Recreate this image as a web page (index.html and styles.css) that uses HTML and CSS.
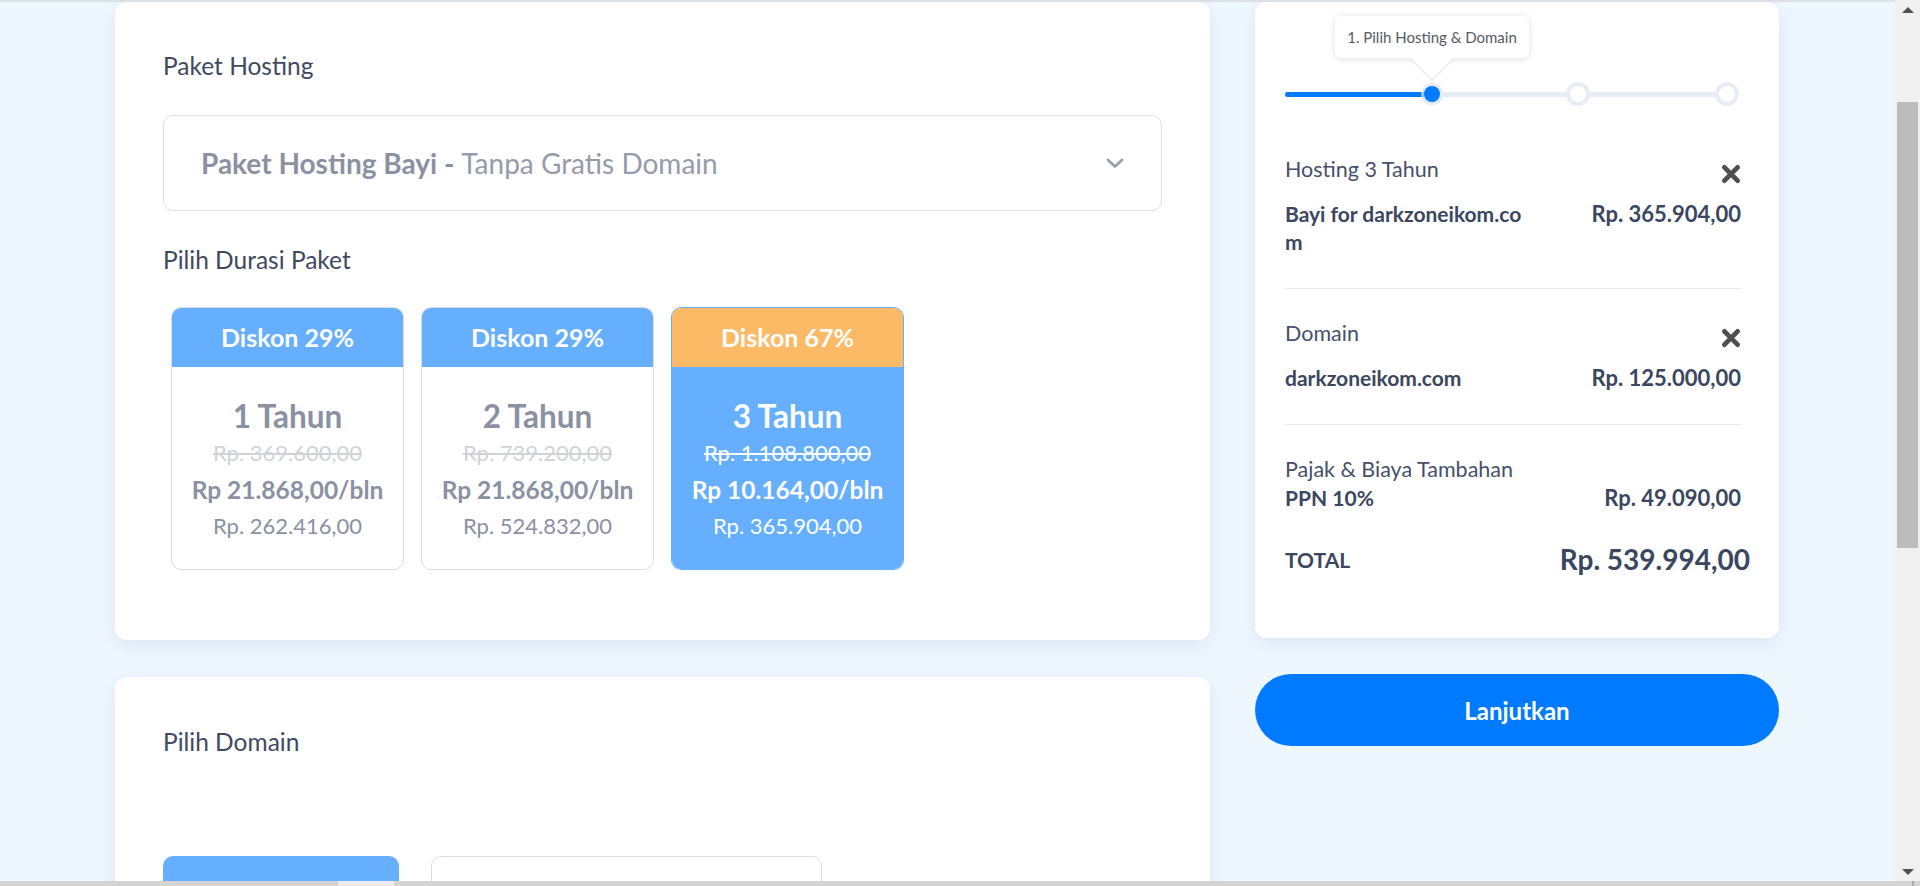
FILE: index.html
```html
<!DOCTYPE html>
<html lang="id">
<head>
<meta charset="utf-8">
<title>Pilih Hosting &amp; Domain</title>
<link rel="stylesheet" href="styles.css">
</head>
<body>
<div class="topline"></div>
<main class="page">
  <div class="col-left">
    <section class="card card-hosting">
      <div class="label">Paket Hosting</div>
      <div class="select">
        <span class="select-text"><b>Paket Hosting Bayi - </b>Tanpa Gratis Domain</span>
        <svg class="chev" viewBox="0 0 18 11"><polyline points="2,2 9,8.5 16,2" fill="none" stroke="#9a9fa8" stroke-width="2.8" stroke-linecap="round" stroke-linejoin="round"/></svg>
      </div>
      <div class="label label-dur">Pilih Durasi Paket</div>
      <div class="durations">
        <div class="dur">
          <div class="dur-head">Diskon 29%</div>
          <div class="dur-body">
            <div class="dur-year">1 Tahun</div>
            <div class="dur-strike">Rp. 369.600,00</div>
            <div class="dur-month">Rp 21.868,00/bln</div>
            <div class="dur-total">Rp. 262.416,00</div>
          </div>
        </div>
        <div class="dur">
          <div class="dur-head">Diskon 29%</div>
          <div class="dur-body">
            <div class="dur-year">2 Tahun</div>
            <div class="dur-strike">Rp. 739.200,00</div>
            <div class="dur-month">Rp 21.868,00/bln</div>
            <div class="dur-total">Rp. 524.832,00</div>
          </div>
        </div>
        <div class="dur active">
          <div class="dur-head">Diskon 67%</div>
          <div class="dur-body">
            <div class="dur-year">3 Tahun</div>
            <div class="dur-strike">Rp. 1.108.800,00</div>
            <div class="dur-month">Rp 10.164,00/bln</div>
            <div class="dur-total">Rp. 365.904,00</div>
          </div>
        </div>
      </div>
    </section>
    <section class="card card-domain">
      <div class="label">Pilih Domain</div>
      <div class="domain-opts">
        <div class="opt opt-active"></div>
        <div class="opt opt-plain"></div>
      </div>
    </section>
  </div>

  <aside class="col-right">
    <section class="card summary">
      <div class="steps-wrap">
        <div class="tooltip">1. Pilih Hosting &amp; Domain</div>
        <div class="steps">
          <span class="seg seg-done"></span>
          <span class="dot-active"></span>
          <span class="seg"></span>
          <span class="dot"></span>
          <span class="seg"></span>
          <span class="dot"></span>
        </div>
      </div>

      <div class="item">
        <div class="item-head">
          <span>Hosting 3 Tahun</span>
          <svg class="x" viewBox="0 0 20 20"><path d="M4 4L16 16M16 4L4 16" stroke="#4f4f4f" stroke-width="4.4" stroke-linecap="round"/></svg>
        </div>
        <div class="item-row">
          <span class="name">Bayi for darkzoneikom.com</span>
          <span class="price">Rp. 365.904,00</span>
        </div>
      </div>

      <div class="item">
        <div class="item-head">
          <span>Domain</span>
          <svg class="x" viewBox="0 0 20 20"><path d="M4 4L16 16M16 4L4 16" stroke="#4f4f4f" stroke-width="4.4" stroke-linecap="round"/></svg>
        </div>
        <div class="item-row">
          <span class="name">darkzoneikom.com</span>
          <span class="price">Rp. 125.000,00</span>
        </div>
      </div>

      <div class="tax">
        <div class="tax-label">Pajak &amp; Biaya Tambahan</div>
        <div class="tax-row">
          <span>PPN 10%</span>
          <span class="price">Rp. 49.090,00</span>
        </div>
      </div>

      <div class="total">
        <span class="total-label">TOTAL</span>
        <span class="total-amount">Rp. 539.994,00</span>
      </div>
    </section>
    <button class="btn" type="button">Lanjutkan</button>
  </aside>
</main>

<div class="vscroll">
  <span class="arrow-up"></span>
  <span class="thumb"></span>
  <span class="arrow-down"></span>
</div>
<div class="hscroll"><span class="hseg"></span><span class="htick"></span></div>
</body>
</html>
```

FILE: styles.css
```css
* { box-sizing: border-box; margin: 0; padding: 0; }
html, body { height: 100%; }
body {
  background: #eef6fe;
  font-family: Lato, "Liberation Sans", sans-serif;
  color: #3f4a60;
  overflow: hidden;
}
.topline { height: 2px; background: #dde2e8; }

.page {
  display: flex;
  align-items: flex-start;
  gap: 45px;
  padding-left: 115px;
}
.col-left {
  width: 1095px;
  display: flex;
  flex-direction: column;
  gap: 37px;
}
.card {
  background: #fff;
  border-radius: 12px;
  box-shadow: 0 6px 18px rgba(40, 70, 130, 0.08);
}

/* hosting card */
.card-hosting { padding: 49px 48px 70px 48px; }
.label { font-size: 24.5px; line-height: 30px; color: #3f4a60; }
.select {
  margin-top: 34px;
  height: 96px;
  border: 1px solid #dcdfe4;
  border-radius: 10px;
  display: flex;
  align-items: center;
  justify-content: space-between;
  padding: 0 37px 0 37px;
}
.select-text { font-size: 28px; color: #969bab; }
.select-text b { font-weight: 700; color: #8b91a1; }
.chev { width: 18px; height: 11px; }
.label-dur { margin-top: 34px; }

.durations {
  margin-top: 32px;
  display: flex;
  gap: 17px;
  padding-left: 8px;
}
.dur {
  width: 233px;
  height: 263px;
  border: 1px solid #dcdcdc;
  border-radius: 10px;
  overflow: hidden;
  text-align: center;
  display: flex;
  flex-direction: column;
}
.dur-head {
  height: 59px;
  line-height: 59px;
  background: #66affe;
  color: #fff;
  font-weight: 700;
  font-size: 25px;
}
.dur-body { flex: 1; padding-top: 31px; color: #8a91a3; }
.dur-year { font-size: 31.5px; line-height: 36px; font-weight: 700; }
.dur-strike { font-size: 22px; line-height: 37px; text-decoration: line-through; color: #d0d3d8; }
.dur-month { font-size: 24.5px; line-height: 37px; font-weight: 700; }
.dur-total { font-size: 22px; line-height: 36px; }
.dur.active { border-color: #66affe; }
.dur.active .dur-head { background: #fcb966; }
.dur.active .dur-body { background: #66affe; color: #fff; }
.dur.active .dur-strike { color: #fff; }

/* domain card */
.card-domain { padding: 50px 48px 0; height: 420px; }
.domain-opts { margin-top: 99px; display: flex; gap: 32px; }
.opt { height: 140px; border-radius: 10px; }
.opt-active { width: 236px; background: #66affe; }
.opt-plain { width: 391px; border: 1px solid #dcdcdc; background: #fff; }

/* summary */
.col-right { width: 524px; }
.summary { padding: 0 38px 59px 30px; }
.steps-wrap { position: relative; padding-top: 80px; }
.tooltip {
  position: absolute;
  z-index: 1;
  top: 14px;
  left: 50px;
  width: 194px;
  height: 42px;
  line-height: 42px;
  text-align: center;
  font-size: 15px;
  color: #555b66;
  background: #fff;
  border-radius: 6px;
  box-shadow: 0 1px 7px rgba(0, 0, 0, 0.13);
}
.tooltip::after {
  content: "";
  position: absolute;
  left: 50%;
  bottom: -15px;
  width: 30px;
  height: 30px;
  margin-left: -15px;
  background: #fff;
  transform: rotate(45deg);
  box-shadow: 1px 1px 2px rgba(0, 0, 0, 0.1);
  z-index: -1;
}
.steps { display: flex; align-items: center; height: 24px; width: 454px; }
.seg { height: 5px; background: #e6edf5; flex: 1; }
.seg-done { flex: none; width: 139px; background: #007bff; border-radius: 3px 0 0 3px; }
.dot-active {
  width: 16px;
  height: 16px;
  border-radius: 50%;
  background: #007bff;
  box-shadow: 0 0 0 3px rgba(220, 228, 240, 0.7), 0 1px 5px rgba(0, 0, 0, 0.15);
}
.dot {
  width: 24px;
  height: 24px;
  border-radius: 50%;
  border: 4px solid #e6edf5;
  background: #fff;
}

.item { padding: 49px 0 32px; border-bottom: 1px solid #e9ecef; }
.item + .item { padding-top: 30px; }
.item-head {
  display: flex;
  justify-content: space-between;
  align-items: flex-start;
  font-size: 21.5px;
  line-height: 28px;
  color: #46506a;
}
.x { width: 22px; height: 22px; margin-top: 8px; margin-right: -1px; }
.item-row {
  margin-top: 15px;
  display: grid;
  grid-template-columns: 242px 1fr;
  font-size: 21px;
  font-weight: 700;
  line-height: 28px;
  color: #3b4660;
}
.item-row .name { word-break: break-all; }
.price { text-align: right; font-size: 22px; }

.tax { padding-top: 30px; }
.tax-label { font-size: 21.5px; line-height: 28px; color: #46506a; }
.tax-row {
  margin-top: 1px;
  display: flex;
  justify-content: space-between;
  font-size: 21px;
  font-weight: 700;
  line-height: 28px;
  color: #3b4660;
}
.total {
  margin-top: 27px;
  height: 40px;
  display: flex;
  justify-content: space-between;
  align-items: center;
  color: #3b4660;
  font-weight: 700;
}
.total-label { font-size: 21px; }
.total-amount { font-size: 28px; margin-right: -9px; }

.btn {
  display: block;
  margin-top: 36px;
  width: 100%;
  height: 72px;
  border: none;
  border-radius: 36px;
  background: #007bff;
  color: #fff;
  font-family: Lato, "Liberation Sans", sans-serif;
  font-weight: 700;
  font-size: 24px;
}

/* fake browser scrollbars */
.vscroll {
  position: fixed;
  top: 0;
  right: 0;
  bottom: 5px;
  width: 25px;
  background: #f1f1f1;
}
.thumb {
  position: absolute;
  top: 102px;
  left: 2px;
  right: 2px;
  height: 446px;
  background: #bcbcbc;
}
.arrow-up, .arrow-down {
  position: absolute;
  left: 7px;
  width: 0;
  height: 0;
  border-left: 6px solid transparent;
  border-right: 6px solid transparent;
}
.arrow-up { top: 7px; border-bottom: 6px solid #505050; }
.arrow-down { bottom: 6px; border-top: 6px solid #505050; }
.hscroll {
  position: fixed;
  left: 0;
  right: 0;
  bottom: 0;
  height: 5px;
  background: #d4d4d4;
}
.hseg { position: absolute; left: 338px; width: 56px; top: 0; bottom: 0; background: #ececec; }
.htick { position: absolute; left: 1912px; width: 2px; top: 0; bottom: 0; background: #a9a9a9; }
```
